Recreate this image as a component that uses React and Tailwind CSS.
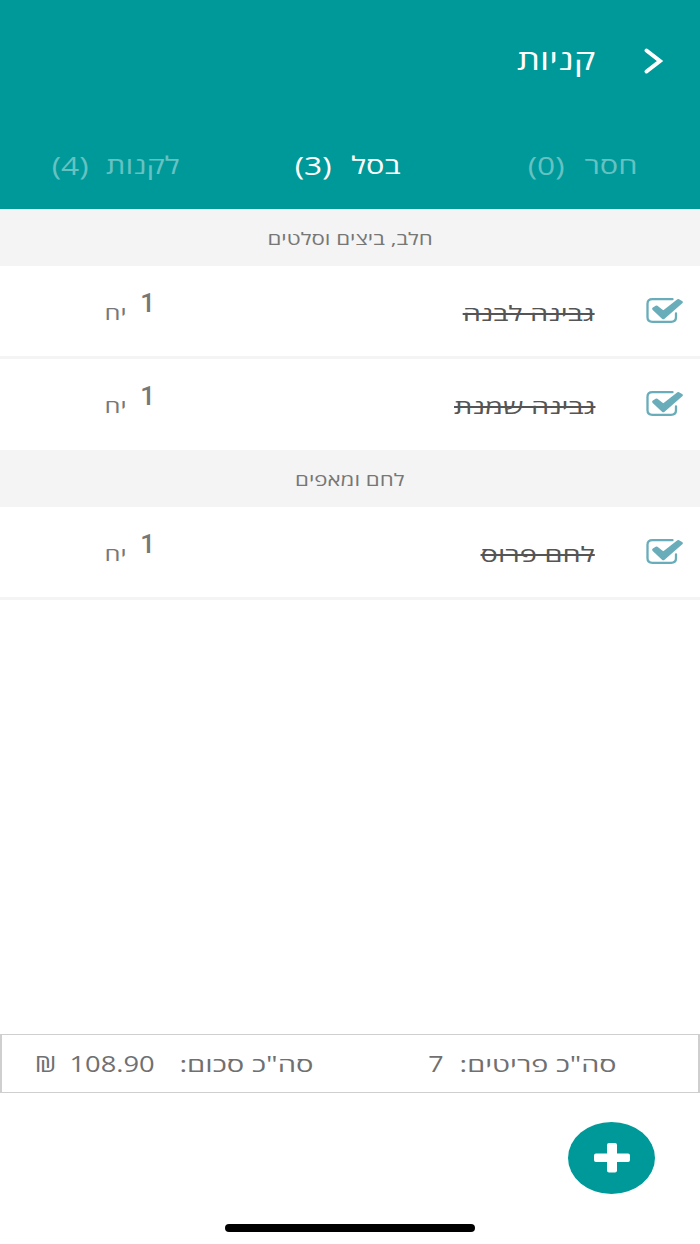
import clsx from "clsx";

const tabs = [
  { label: "חסר", count: 0, tab: "w-[236px]", word: "w-[58px]" },
  { label: "בסל", count: 3, active: true, tab: "w-[221px]", word: "w-[55px]" },
  { label: "לקנות", count: 4, tab: "w-[243px]", word: "w-[77px]" },
];

const sections = [
  {
    title: "חלב, ביצים וסלטים",
    items: [
      { name: "גבינה לבנה", amount: 1, divider: true },
      { name: "גבינה שמנת", amount: 1 },
    ],
  },
  {
    title: "לחם ומאפים",
    items: [{ name: "לחם פרוס", amount: 1, divider: true }],
  },
];

function Wide({ className, children }) {
  return (
    <span className={clsx("inline-block whitespace-nowrap", className)}>
      {children}
    </span>
  );
}

function CheckIcon() {
  return (
    <svg width="38" height="28" viewBox="0 0 38 28" fill="none">
      <path
        d="M27.500 2.200H7.500C4.500 2.200 2.500 4 2.500 6.700V20.300C2.500 23 4.500 24.800 7.500 24.800H26C29 24.800 31 23 31 20.300V16.500"
        stroke="#68adb9"
        strokeWidth="2.300"
        strokeLinecap="round"
      />
      <path
        d="M8.700 11.800L11.500 10L18.300 15.300L33.300 3.500L36.300 5.200L18.300 20.800Z"
        fill="#68adb9"
        stroke="#68adb9"
        strokeWidth="3"
        strokeLinejoin="round"
      />
    </svg>
  );
}

function Item({ item }) {
  return (
    <li
      className={clsx(
        "flex items-start bg-white",
        item.divider ? "h-[93px] border-b-3 border-[#f4f4f4]" : "h-[91px]"
      )}
    >
      <div className="w-[105px] pr-[17px] pt-[31px]">
        <CheckIcon />
      </div>
      <div className="w-[440px] pt-[31px]">
        <Wide className="origin-right scale-x-[1.38] text-[21px] leading-8 font-medium text-[#555] line-through decoration-2">
          {item.name}
        </Wide>
      </div>
      <div className="w-[29px] pt-[21px]">
        <Wide className="font-['Roboto'] text-[26px] leading-8 font-medium text-[#777]">
          {item.amount}
        </Wide>
      </div>
      <div className="pt-[31px]">
        <Wide className="origin-right scale-x-[1.34] text-[19px] leading-8 font-medium text-[#777]">
          יח
        </Wide>
      </div>
    </li>
  );
}

export default function App() {
  return (
    <div
      dir="rtl"
      className="flex h-[1244px] w-[700px] flex-col overflow-hidden bg-white font-['Open_Sans','Noto_Sans',sans-serif]"
    >
      <header className="h-[209px] bg-[#009999] text-white">
        <div className="flex h-[121px] items-center pr-[36px]">
          <svg width="22" height="28" viewBox="0 0 22 28" fill="none">
            <path d="M4.500 3.500L18 14L4.500 24.500" stroke="white" strokeWidth="4" strokeLinecap="round" />
          </svg>
          <h1 className="pr-[47px] pb-[3px]">
            <Wide className="origin-right scale-x-[1.3] text-[28px] leading-10 font-medium">קניות</Wide>
          </h1>
        </div>
        <nav className="flex h-[88px]">
          {tabs.map((tab) => (
            <button
              key={tab.label}
              className={clsx(
                "flex items-center pr-[63px] leading-8",
                tab.tab,
                tab.active ? "font-medium text-white" : "text-[#66c2c2]"
              )}
            >
              <span className={clsx("pt-[3px] text-right", tab.word)}>
                <Wide className="origin-right scale-x-[1.28] text-[24px]">{tab.label}</Wide>
              </span>
              <Wide className="origin-right scale-x-[1.22] pr-3 pb-px text-[26px]">
                ({tab.count})
              </Wide>
            </button>
          ))}
        </nav>
      </header>

      <main className="h-[825px]">
        {sections.map((section) => (
          <section key={section.title}>
            <h2 className="flex h-[57px] items-center justify-center bg-[#f4f4f4] pt-0.5 text-[17px] text-[#777]">
              <Wide className="scale-x-[1.31]">{section.title}</Wide>
            </h2>
            <ul>
              {section.items.map((item) => (
                <Item key={item.name} item={item} />
              ))}
            </ul>
          </section>
        ))}
      </main>

      <div className="flex h-[59px] items-center border-x-2 border-y border-[#cfcfcf] pr-[81px] text-[22px] text-[#707070]">
        <div className="w-[173px]">
          <Wide className="origin-right scale-x-[1.37] text-[21px]">סה"כ פריטים:</Wide>
        </div>
        <div className="w-[131px]">
          <Wide className="origin-right scale-x-[1.22]">7</Wide>
        </div>
        <div className="w-[158px]">
          <Wide className="origin-right scale-x-[1.39] text-[21px]">סה"כ סכום:</Wide>
        </div>
        <div className="w-[99px]">
          <Wide className="origin-right scale-x-[1.24]">108.90</Wide>
        </div>
        <Wide className="origin-right scale-x-[1.25]">₪</Wide>
      </div>

      <footer className="flex flex-1 flex-col items-center pt-[29px]">
        <button className="mr-[45px] flex h-[72px] w-[87px] items-center justify-center self-start rounded-[50%] bg-[#009999]">
          <svg width="36" height="30" viewBox="0 0 36 30" fill="white">
            <rect x="13" y="0" width="10" height="29.500" rx="2" />
            <rect x="0" y="10.500" width="36" height="8.500" rx="2" />
          </svg>
        </button>
        <div className="mt-[30px] h-2 w-[250px] rounded-full bg-black" />
      </footer>
    </div>
  );
}
